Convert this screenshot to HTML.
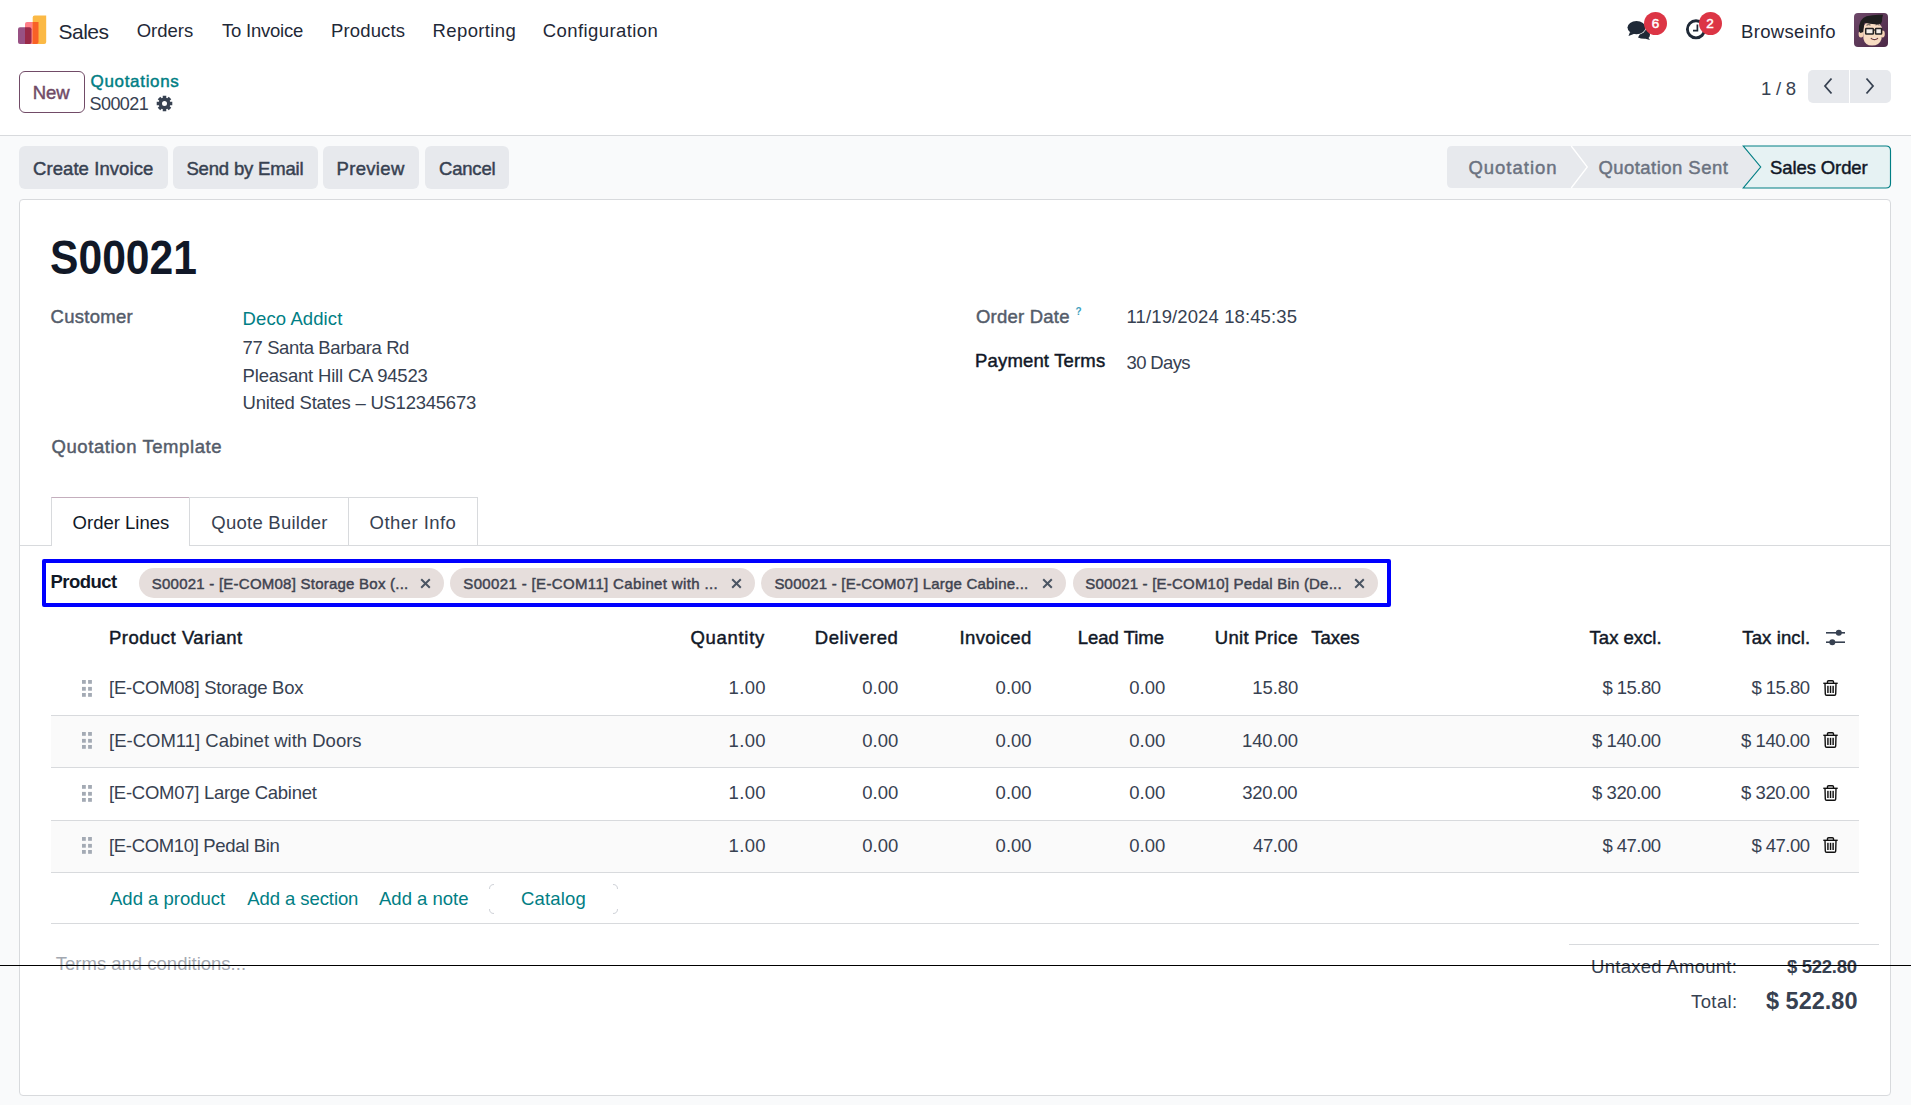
<!DOCTYPE html>
<html><head><meta charset="utf-8">
<style>
html,body{margin:0;padding:0;}
body{width:1911px;height:1105px;position:relative;overflow:hidden;background:#f9fafb;font-family:"Liberation Sans",sans-serif;color:#374151;}
.a{position:absolute;white-space:nowrap;line-height:1;}
.s{position:absolute;}
</style></head>
<body>
<!-- top white area -->
<div class="s" style="left:0;top:0;width:1911px;height:135px;background:#fff;border-bottom:1px solid #d8dadd;"></div>

<!-- logo -->
<svg class="s" style="left:17px;top:15px" width="30" height="30" viewBox="0 0 30 30">
  <path d="M1 14.2 Q1 12.2 3 12.2 H14.5 V29 H3 Q1 29 1 27 Z" fill="#985184"/>
  <path d="M8 9 Q8 7 10 7 H21.5 V27 Q21.5 29 19.5 29 H8 Z" fill="#ff7f89"/>
  <path d="M8 12.2 H12.5 Q14.5 12.2 14.5 14.2 V27 Q14.5 29 12.5 29 H8 Z" fill="#9a2a48"/>
  <path d="M15.7 2.6 Q15.7 0.6 17.7 0.6 H29.2 V27 Q29.2 29 27.2 29 H15.7 Z" fill="#fbb945"/>
  <path d="M15.7 7 H21.5 V27 Q21.5 29 19.5 29 H15.7 Z" fill="#f86126"/>
</svg>

<!-- chat icon -->
<svg class="s" style="left:1626px;top:19px" width="28" height="22" viewBox="0 0 28 22">
  <path d="M17 9.5 A8 6 0 0 1 24 15.5 Q24 17.5 22.5 19 L24 21 L19.5 19.8 Q15 20 12 18.5 Z" fill="#1f2937"/>
  <ellipse cx="10.5" cy="8.6" rx="9.8" ry="7.2" fill="#fff"/>
  <ellipse cx="10.5" cy="8.6" rx="9" ry="6.6" fill="#1f2937"/>
  <path d="M4 13 L2.5 17 L9 14.5 Z" fill="#1f2937"/>
</svg>
<div class="s" style="left:1644px;top:11.5px;width:23px;height:23px;border-radius:50%;background:#dc3545;"></div>
<svg class="s" style="left:1685px;top:18.3px" width="24" height="24" viewBox="0 0 24 24">
  <circle cx="11" cy="11.3" r="8.6" fill="none" stroke="#1f2937" stroke-width="2.9"/>
  <path d="M12.4 6.4 V12.6 H8" fill="none" stroke="#1f2937" stroke-width="1.7"/>
</svg>
<div class="s" style="left:1698.6px;top:11.5px;width:23px;height:23px;border-radius:50%;background:#dc3545;"></div>
<div class="a" style="left:1644px;top:16.5px;width:23px;text-align:center;font-size:13.5px;-webkit-text-stroke:0.5px #fff;color:#fff;">6</div>
<div class="a" style="left:1698.6px;top:16.5px;width:23px;text-align:center;font-size:13.5px;-webkit-text-stroke:0.5px #fff;color:#fff;">2</div>

<!-- avatar -->
<svg class="s" style="left:1854px;top:13px" width="34" height="34" viewBox="0 0 34 34">
  <defs><linearGradient id="ag" x1="0" y1="0" x2="1" y2="1"><stop offset="0" stop-color="#6d4869"/><stop offset="1" stop-color="#4b2846"/></linearGradient></defs>
  <rect width="34" height="34" rx="4" fill="url(#ag)"/>
  <ellipse cx="7" cy="21" rx="2.4" ry="3.6" fill="#f4d2b4"/>
  <ellipse cx="28.6" cy="21" rx="2.2" ry="3.4" fill="#f4d2b4"/>
  <path d="M9 16 Q9 9 18 9 Q28 9 28 17 L27.5 26 Q25.5 32.6 18 32.6 Q11 32.6 9.5 26 Z" fill="#f7dcc2"/>
  <path d="M5 18.5 Q3.8 6 12.5 3.2 Q20 1.2 29 1.8 L28.2 5 Q28.5 8.5 27 10.8 Q18 11.8 10.5 9.8 L9.2 19 L6.5 20 Z" fill="#1e1e1e"/>
  <path d="M12.5 12.2 Q14.5 11.2 16.5 12" stroke="#333" stroke-width="0.9" fill="none"/>
  <path d="M21.5 11.8 Q23.5 11.2 25.5 12" stroke="#333" stroke-width="0.9" fill="none"/>
  <rect x="11.7" y="15.6" width="7.6" height="5.4" rx="0.6" fill="#f4efe9" stroke="#222" stroke-width="1.5"/>
  <rect x="21.6" y="15.6" width="6" height="5.4" rx="0.6" fill="#f4efe9" stroke="#222" stroke-width="1.5"/>
  <path d="M19.3 17 H21.6" stroke="#222" stroke-width="1.2"/>
  <path d="M16.8 25.3 Q20.5 28 24 25.3" fill="#fff" stroke="#6b3a3a" stroke-width="1.1"/>
</svg>

<!-- control panel -->
<div class="s" style="left:19px;top:71px;width:64px;height:40px;border:1px solid #714b67;border-radius:6px;background:#fff;"></div>
<svg class="s" style="left:155.5px;top:95px" width="17" height="17" viewBox="0 0 17 17"><path fill="#374151" fill-rule="evenodd" d="M6.78 2.86 L6.70 0.71 L10.30 0.71 L10.22 2.86 L11.27 3.29 L12.74 1.72 L15.28 4.26 L13.71 5.73 L14.14 6.78 L16.29 6.70 L16.29 10.30 L14.14 10.22 L13.71 11.27 L15.28 12.74 L12.74 15.28 L11.27 13.71 L10.22 14.14 L10.30 16.29 L6.70 16.29 L6.78 14.14 L5.73 13.71 L4.26 15.28 L1.72 12.74 L3.29 11.27 L2.86 10.22 L0.71 10.30 L0.71 6.70 L2.86 6.78 L3.29 5.73 L1.72 4.26 L4.26 1.72 L5.73 3.29 Z M11.00 8.50 A2.5 2.5 0 1 0 6.00 8.50 A2.5 2.5 0 1 0 11.00 8.50 Z"/></svg>
<div class="s" style="left:1807.5px;top:70px;width:41.5px;height:33px;background:#e7e9ed;border-radius:5px 0 0 5px;"></div>
<div class="s" style="left:1850px;top:70px;width:41px;height:33px;background:#e7e9ed;border-radius:0 5px 5px 0;"></div>
<svg class="s" style="left:1818px;top:76px" width="20" height="20" viewBox="0 0 20 20"><path d="M13.5 2.5 L7 10 L13.5 17.5" fill="none" stroke="#374151" stroke-width="1.8"/></svg>
<svg class="s" style="left:1860px;top:76px" width="20" height="20" viewBox="0 0 20 20"><path d="M6.5 2.5 L13 10 L6.5 17.5" fill="none" stroke="#374151" stroke-width="1.8"/></svg>

<!-- action buttons -->
<div class="s" style="left:19px;top:146px;width:149px;height:42.6px;background:#e7e9ed;border-radius:6px;"></div>
<div class="s" style="left:173px;top:146px;width:145px;height:42.6px;background:#e7e9ed;border-radius:6px;"></div>
<div class="s" style="left:323px;top:146px;width:96px;height:42.6px;background:#e7e9ed;border-radius:6px;"></div>
<div class="s" style="left:425px;top:146px;width:84px;height:42.6px;background:#e7e9ed;border-radius:6px;"></div>

<!-- statusbar -->
<svg class="s" style="left:1446px;top:145px" width="446" height="44" viewBox="0 0 446 44">
  <path d="M6 1 H297.3 L314.7 22 L297.3 43 H6 Q1 43 1 38 V6 Q1 1 6 1 Z" fill="#e7e9ed"/>
  <path d="M125.2 1 L141.3 22 L125.2 43" fill="none" stroke="#fff" stroke-width="1.3"/>
  <path d="M297.3 1 H440 Q444.5 1 444.5 5.5 V38.5 Q444.5 43 440 43 H297.3 L314.7 22 Z" fill="#e6f2f3" stroke="#017e84" stroke-width="1.15"/>
</svg>

<!-- sheet -->
<div class="s" style="left:19px;top:199px;width:1870px;height:895px;background:#fff;border:1px solid #d8dadd;border-radius:4px;"></div>
<div class="s" style="left:1075.5px;top:306.5px;font:700 10px/1 'Liberation Sans';color:#3d9fbe;">?</div>

<!-- tabs -->
<div class="s" style="left:20px;top:545px;width:1870px;height:1px;background:#d8dadd;"></div>
<div class="s" style="left:51px;top:497px;width:137px;height:48px;border:1px solid #d8dadd;border-bottom:none;border-top-color:#c4aebd;background:#fff;"></div>
<div class="s" style="left:189px;top:497px;width:158px;height:48px;border:1px solid #d8dadd;border-bottom:none;"></div>
<div class="s" style="left:348px;top:497px;width:128px;height:48px;border:1px solid #d8dadd;border-bottom:none;"></div>

<!-- product filter -->
<div class="s" style="left:42px;top:559px;width:1341px;height:40px;border:4px solid #0000ff;border-radius:2px;"></div>
<div class="s" style="left:139px;top:568px;width:305px;height:30px;background:#e6dedc;border-radius:15px;"></div>
<svg class="s" style="left:419.5px;top:578.3px" width="11" height="11" viewBox="0 0 11 11"><path d="M1.2 1.2L9.8 9.8M9.8 1.2L1.2 9.8" stroke="#4b5563" stroke-width="2"/></svg>
<div class="s" style="left:450px;top:568px;width:305px;height:30px;background:#e6dedc;border-radius:15px;"></div>
<svg class="s" style="left:730.5px;top:578.3px" width="11" height="11" viewBox="0 0 11 11"><path d="M1.2 1.2L9.8 9.8M9.8 1.2L1.2 9.8" stroke="#4b5563" stroke-width="2"/></svg>
<div class="s" style="left:761px;top:568px;width:305px;height:30px;background:#e6dedc;border-radius:15px;"></div>
<svg class="s" style="left:1041.5px;top:578.3px" width="11" height="11" viewBox="0 0 11 11"><path d="M1.2 1.2L9.8 9.8M9.8 1.2L1.2 9.8" stroke="#4b5563" stroke-width="2"/></svg>
<div class="s" style="left:1073px;top:568px;width:305px;height:30px;background:#e6dedc;border-radius:15px;"></div>
<svg class="s" style="left:1353.5px;top:578.3px" width="11" height="11" viewBox="0 0 11 11"><path d="M1.2 1.2L9.8 9.8M9.8 1.2L1.2 9.8" stroke="#4b5563" stroke-width="2"/></svg>


<!-- table -->
<svg class="s" style="left:1826px;top:629px" width="19" height="17" viewBox="0 0 19 17"><g fill="#374151"><rect x="0" y="3" width="19" height="1.6"/><rect x="0" y="12.4" width="19" height="1.6"/><circle cx="12.8" cy="3.8" r="3"/><circle cx="6.3" cy="13.2" r="3"/></g></svg>
<div class="s" style="left:51px;top:663px;width:1808px;height:52px;border-bottom:1px solid #d8dadd;"></div>
<svg class="s" style="left:82px;top:679.8px" width="11" height="17" viewBox="0 0 11 17"><g fill="#a3aab4"><rect x="0" y="0" width="3.8" height="3.8"/><rect x="6.1" y="0" width="3.8" height="3.8"/><rect x="0" y="6.9" width="3.8" height="3.8"/><rect x="6.1" y="6.9" width="3.8" height="3.8"/><rect x="0" y="13" width="3.8" height="3.8"/><rect x="6.1" y="13" width="3.8" height="3.8"/></g></svg>
<svg class="s" style="left:1823px;top:679.6px" width="15" height="16" viewBox="0 0 15 16"><g fill="none" stroke="#111" stroke-width="1.4"><path d="M0.3 3.3H14.7"/><path d="M4.5 3.3V1.8Q4.5 0.7 5.6 0.7H9.4Q10.5 0.7 10.5 1.8V3.3"/><path d="M2 3.3L2.3 14Q2.3 15.3 3.6 15.3H11.4Q12.7 15.3 12.7 14L13 3.3"/></g><g fill="#111"><rect x="4.2" y="5.8" width="1.45" height="7.2"/><rect x="6.8" y="5.8" width="1.45" height="7.2"/><rect x="9.4" y="5.8" width="1.45" height="7.2"/></g></svg>
<div class="s" style="left:51px;top:716px;width:1808px;height:51px;background:#fafafa;border-bottom:1px solid #d8dadd;"></div>
<svg class="s" style="left:82px;top:732.1px" width="11" height="17" viewBox="0 0 11 17"><g fill="#a3aab4"><rect x="0" y="0" width="3.8" height="3.8"/><rect x="6.1" y="0" width="3.8" height="3.8"/><rect x="0" y="6.9" width="3.8" height="3.8"/><rect x="6.1" y="6.9" width="3.8" height="3.8"/><rect x="0" y="13" width="3.8" height="3.8"/><rect x="6.1" y="13" width="3.8" height="3.8"/></g></svg>
<svg class="s" style="left:1823px;top:732.0px" width="15" height="16" viewBox="0 0 15 16"><g fill="none" stroke="#111" stroke-width="1.4"><path d="M0.3 3.3H14.7"/><path d="M4.5 3.3V1.8Q4.5 0.7 5.6 0.7H9.4Q10.5 0.7 10.5 1.8V3.3"/><path d="M2 3.3L2.3 14Q2.3 15.3 3.6 15.3H11.4Q12.7 15.3 12.7 14L13 3.3"/></g><g fill="#111"><rect x="4.2" y="5.8" width="1.45" height="7.2"/><rect x="6.8" y="5.8" width="1.45" height="7.2"/><rect x="9.4" y="5.8" width="1.45" height="7.2"/></g></svg>
<div class="s" style="left:51px;top:768px;width:1808px;height:52px;border-bottom:1px solid #d8dadd;"></div>
<svg class="s" style="left:82px;top:784.6px" width="11" height="17" viewBox="0 0 11 17"><g fill="#a3aab4"><rect x="0" y="0" width="3.8" height="3.8"/><rect x="6.1" y="0" width="3.8" height="3.8"/><rect x="0" y="6.9" width="3.8" height="3.8"/><rect x="6.1" y="6.9" width="3.8" height="3.8"/><rect x="0" y="13" width="3.8" height="3.8"/><rect x="6.1" y="13" width="3.8" height="3.8"/></g></svg>
<svg class="s" style="left:1823px;top:784.5px" width="15" height="16" viewBox="0 0 15 16"><g fill="none" stroke="#111" stroke-width="1.4"><path d="M0.3 3.3H14.7"/><path d="M4.5 3.3V1.8Q4.5 0.7 5.6 0.7H9.4Q10.5 0.7 10.5 1.8V3.3"/><path d="M2 3.3L2.3 14Q2.3 15.3 3.6 15.3H11.4Q12.7 15.3 12.7 14L13 3.3"/></g><g fill="#111"><rect x="4.2" y="5.8" width="1.45" height="7.2"/><rect x="6.8" y="5.8" width="1.45" height="7.2"/><rect x="9.4" y="5.8" width="1.45" height="7.2"/></g></svg>
<div class="s" style="left:51px;top:821px;width:1808px;height:51px;background:#fafafa;border-bottom:1px solid #d8dadd;"></div>
<svg class="s" style="left:82px;top:837.0px" width="11" height="17" viewBox="0 0 11 17"><g fill="#a3aab4"><rect x="0" y="0" width="3.8" height="3.8"/><rect x="6.1" y="0" width="3.8" height="3.8"/><rect x="0" y="6.9" width="3.8" height="3.8"/><rect x="6.1" y="6.9" width="3.8" height="3.8"/><rect x="0" y="13" width="3.8" height="3.8"/><rect x="6.1" y="13" width="3.8" height="3.8"/></g></svg>
<svg class="s" style="left:1823px;top:837.0px" width="15" height="16" viewBox="0 0 15 16"><g fill="none" stroke="#111" stroke-width="1.4"><path d="M0.3 3.3H14.7"/><path d="M4.5 3.3V1.8Q4.5 0.7 5.6 0.7H9.4Q10.5 0.7 10.5 1.8V3.3"/><path d="M2 3.3L2.3 14Q2.3 15.3 3.6 15.3H11.4Q12.7 15.3 12.7 14L13 3.3"/></g><g fill="#111"><rect x="4.2" y="5.8" width="1.45" height="7.2"/><rect x="6.8" y="5.8" width="1.45" height="7.2"/><rect x="9.4" y="5.8" width="1.45" height="7.2"/></g></svg>

<svg class="s" style="left:488px;top:883px" width="131" height="32" viewBox="0 0 131 32"><g fill="none" stroke="#c8ccd2" stroke-width="0.9"><path d="M1.5 6 Q1.5 1.5 6 1.5"/><path d="M125 1.5 Q129.5 1.5 129.5 6"/><path d="M1.5 26 Q1.5 30.5 6 30.5"/><path d="M125 30.5 Q129.5 30.5 129.5 26"/></g></svg>
<div class="s" style="left:51px;top:923px;width:1808px;height:1px;background:#d8dadd;"></div>

<!-- totals -->
<div class="s" style="left:1569px;top:944px;width:310px;height:1px;background:#d8dadd;"></div>

<div id="sales" class="a" style="top:20.52px;font-size:21px;color:#1f2937;letter-spacing:-0.500px;left:58.50px;">Sales</div>
<div id="n1" class="a" style="top:21.94px;font-size:18.5px;color:#1f2937;left:136.70px;">Orders</div>
<div id="n2" class="a" style="top:21.94px;font-size:18.5px;color:#1f2937;letter-spacing:-0.222px;left:222.00px;">To Invoice</div>
<div id="n3" class="a" style="top:21.94px;font-size:18.5px;color:#1f2937;letter-spacing:0.143px;left:331.00px;">Products</div>
<div id="n4" class="a" style="top:21.94px;font-size:18.5px;color:#1f2937;letter-spacing:0.375px;left:432.60px;">Reporting</div>
<div id="n5" class="a" style="top:21.94px;font-size:18.5px;color:#1f2937;letter-spacing:0.417px;left:542.80px;">Configuration</div>
<div id="bi" class="a" style="top:22.74px;font-size:18.5px;color:#1f2937;letter-spacing:0.333px;left:1741.00px;">Browseinfo</div>
<div id="new" class="a" style="top:84.14px;font-size:18.5px;color:#714b67;-webkit-text-stroke:0.45px #714b67;letter-spacing:-0.000px;left:32.70px;">New</div>
<div id="bc1" class="a" style="top:73.21px;font-size:17px;color:#017e84;-webkit-text-stroke:0.45px #017e84;letter-spacing:0.667px;left:90.60px;">Quotations</div>
<div id="bc2" class="a" style="top:95.06px;font-size:18px;color:#374151;letter-spacing:-0.600px;left:89.60px;">S00021</div>
<div id="pg" class="a" style="top:79.74px;font-size:18.5px;color:#374151;letter-spacing:-0.250px;left:1761.00px;">1 / 8</div>
<div id="ci" class="a" style="top:159.64px;font-size:18.5px;color:#374151;-webkit-text-stroke:0.45px #374151;letter-spacing:0.077px;left:33.00px;">Create Invoice</div>
<div id="se" class="a" style="top:159.64px;font-size:18.5px;color:#374151;-webkit-text-stroke:0.45px #374151;letter-spacing:-0.167px;left:186.40px;">Send by Email</div>
<div id="pv" class="a" style="top:159.64px;font-size:18.5px;color:#374151;-webkit-text-stroke:0.45px #374151;letter-spacing:0.333px;left:336.50px;">Preview</div>
<div id="cn" class="a" style="top:159.64px;font-size:18.5px;color:#374151;-webkit-text-stroke:0.45px #374151;letter-spacing:-0.200px;left:439.00px;">Cancel</div>
<div id="st1" class="a" style="top:159.34px;font-size:18.5px;color:#6b7280;-webkit-text-stroke:0.45px #6b7280;letter-spacing:1.000px;left:1468.40px;">Quotation</div>
<div id="st2" class="a" style="top:159.34px;font-size:18.5px;color:#6b7280;-webkit-text-stroke:0.45px #6b7280;letter-spacing:0.462px;left:1598.40px;">Quotation Sent</div>
<div id="st3" class="a" style="top:159.34px;font-size:18.5px;color:#111827;-webkit-text-stroke:0.45px #111827;letter-spacing:-0.100px;left:1770.00px;">Sales Order</div>
<div id="title" class="a" style="top:233.12px;font-size:49px;color:#111827;font-weight:700;left:50.00px;transform:scaleX(0.8702);transform-origin:0 0;">S00021</div>
<div id="cu" class="a" style="top:308.44px;font-size:18.5px;color:#545c6a;-webkit-text-stroke:0.45px #545c6a;letter-spacing:0.286px;left:50.50px;">Customer</div>
<div id="da" class="a" style="top:310.04px;font-size:18.5px;color:#017e84;letter-spacing:0.100px;left:242.60px;">Deco Addict</div>
<div id="a1" class="a" style="top:339.14px;font-size:18.5px;color:#374151;letter-spacing:-0.389px;left:242.60px;">77 Santa Barbara Rd</div>
<div id="a2" class="a" style="top:367.04px;font-size:18.5px;color:#374151;letter-spacing:-0.190px;left:242.60px;">Pleasant Hill CA 94523</div>
<div id="a3" class="a" style="top:393.94px;font-size:18.5px;color:#374151;letter-spacing:-0.240px;left:242.60px;">United States – US12345673</div>
<div id="qt" class="a" style="top:437.84px;font-size:18.5px;color:#545c6a;-webkit-text-stroke:0.45px #545c6a;letter-spacing:0.588px;left:51.50px;">Quotation Template</div>
<div id="od" class="a" style="top:308.44px;font-size:18.5px;color:#545c6a;-webkit-text-stroke:0.45px #545c6a;letter-spacing:0.222px;left:976.00px;">Order Date</div>
<div id="odv" class="a" style="top:308.14px;font-size:18.5px;color:#374151;letter-spacing:0.111px;left:1126.60px;">11/19/2024 18:45:35</div>
<div id="pt" class="a" style="top:352.44px;font-size:18.5px;color:#111827;-webkit-text-stroke:0.45px #111827;letter-spacing:0.167px;left:975.00px;">Payment Terms</div>
<div id="ptv" class="a" style="top:353.94px;font-size:18.5px;color:#374151;letter-spacing:-0.667px;left:1126.60px;">30 Days</div>
<div id="tb1" class="a" style="top:514.04px;font-size:18.5px;color:#111827;letter-spacing:0.000px;left:72.60px;">Order Lines</div>
<div id="tb2" class="a" style="top:514.04px;font-size:18.5px;color:#374151;letter-spacing:0.250px;left:211.30px;">Quote Builder</div>
<div id="tb3" class="a" style="top:514.04px;font-size:18.5px;color:#374151;letter-spacing:0.444px;left:369.60px;">Other Info</div>
<div id="pr" class="a" style="top:572.94px;font-size:18.5px;color:#111827;font-weight:700;letter-spacing:-0.500px;left:50.40px;">Product</div>
<div id="h1" class="a" style="top:629.04px;font-size:18.5px;color:#111827;-webkit-text-stroke:0.45px #111827;letter-spacing:0.500px;left:109.00px;">Product Variant</div>
<div id="h2" class="a" style="top:629.04px;font-size:18.5px;color:#111827;-webkit-text-stroke:0.45px #111827;letter-spacing:0.714px;left:690.40px;">Quantity</div>
<div id="h3" class="a" style="top:629.04px;font-size:18.5px;color:#111827;-webkit-text-stroke:0.45px #111827;letter-spacing:0.625px;left:814.70px;">Delivered</div>
<div id="h4" class="a" style="top:629.04px;font-size:18.5px;color:#111827;-webkit-text-stroke:0.45px #111827;letter-spacing:0.429px;left:959.40px;">Invoiced</div>
<div id="h5" class="a" style="top:629.04px;font-size:18.5px;color:#111827;-webkit-text-stroke:0.45px #111827;letter-spacing:0.000px;left:1077.70px;">Lead Time</div>
<div id="h6" class="a" style="top:629.04px;font-size:18.5px;color:#111827;-webkit-text-stroke:0.45px #111827;letter-spacing:0.333px;left:1214.70px;">Unit Price</div>
<div id="h7" class="a" style="top:629.04px;font-size:18.5px;color:#111827;-webkit-text-stroke:0.45px #111827;left:1311.30px;">Taxes</div>
<div id="h8" class="a" style="top:629.04px;font-size:18.5px;color:#111827;-webkit-text-stroke:0.45px #111827;letter-spacing:0.000px;left:1589.60px;">Tax excl.</div>
<div id="h9" class="a" style="top:629.04px;font-size:18.5px;color:#111827;-webkit-text-stroke:0.45px #111827;letter-spacing:0.125px;left:1742.30px;">Tax incl.</div>
<div id="l1" class="a" style="top:890.34px;font-size:18.5px;color:#017e84;letter-spacing:0.000px;left:110.00px;">Add a product</div>
<div id="l2" class="a" style="top:890.34px;font-size:18.5px;color:#017e84;letter-spacing:-0.083px;left:247.30px;">Add a section</div>
<div id="l3" class="a" style="top:890.34px;font-size:18.5px;color:#017e84;letter-spacing:0.000px;left:379.00px;">Add a note</div>
<div id="l4" class="a" style="top:890.34px;font-size:18.5px;color:#017e84;letter-spacing:0.167px;left:521.00px;">Catalog</div>
<div id="tc" class="a" style="top:955.14px;font-size:18.5px;color:#a3a8b1;letter-spacing:0.000px;left:55.80px;">Terms and conditions...</div>
<div id="ua" class="a" style="top:958.24px;font-size:18.5px;color:#374151;letter-spacing:0.286px;left:1591.00px;">Untaxed Amount:</div>
<div id="uav" class="a" style="top:958.14px;font-size:18.5px;color:#374151;font-weight:700;letter-spacing:-0.286px;left:1787.00px;">$ 522.80</div>
<div id="tt" class="a" style="top:992.64px;font-size:18.5px;color:#374151;letter-spacing:0.400px;left:1691.00px;">Total:</div>
<div id="ttv" class="a" style="top:989.71px;font-size:23.5px;color:#374151;font-weight:700;letter-spacing:-0.000px;left:1766.00px;">$ 522.80</div>
<div id="r0n" class="a" style="top:679.34px;font-size:18.5px;color:#374151;letter-spacing:-0.250px;left:109.00px;">[E-COM08] Storage Box</div>
<div id="r0c0" class="a" style="top:679.34px;font-size:18.5px;color:#374151;letter-spacing:0.333px;left:728.60px;">1.00</div>
<div id="r0c1" class="a" style="top:679.34px;font-size:18.5px;color:#374151;letter-spacing:0.000px;left:862.30px;">0.00</div>
<div id="r0c2" class="a" style="top:679.34px;font-size:18.5px;color:#374151;letter-spacing:0.000px;left:995.60px;">0.00</div>
<div id="r0c3" class="a" style="top:679.34px;font-size:18.5px;color:#374151;letter-spacing:0.000px;left:1129.30px;">0.00</div>
<div id="r0c4" class="a" style="top:679.34px;font-size:18.5px;color:#374151;letter-spacing:-0.050px;left:1252.20px;">15.80</div>
<div id="r0c5" class="a" style="top:679.34px;font-size:18.5px;color:#374151;letter-spacing:-0.533px;left:1602.50px;">$ 15.80</div>
<div id="r0c6" class="a" style="top:679.34px;font-size:18.5px;color:#374151;letter-spacing:-0.533px;left:1751.50px;">$ 15.80</div>
<div id="r1n" class="a" style="top:732.04px;font-size:18.5px;color:#374151;left:109.00px;">[E-COM11] Cabinet with Doors</div>
<div id="r1c0" class="a" style="top:732.04px;font-size:18.5px;color:#374151;letter-spacing:0.333px;left:728.60px;">1.00</div>
<div id="r1c1" class="a" style="top:732.04px;font-size:18.5px;color:#374151;letter-spacing:0.000px;left:862.30px;">0.00</div>
<div id="r1c2" class="a" style="top:732.04px;font-size:18.5px;color:#374151;letter-spacing:0.000px;left:995.60px;">0.00</div>
<div id="r1c3" class="a" style="top:732.04px;font-size:18.5px;color:#374151;letter-spacing:0.000px;left:1129.30px;">0.00</div>
<div id="r1c4" class="a" style="top:732.04px;font-size:18.5px;color:#374151;letter-spacing:-0.120px;left:1242.00px;">140.00</div>
<div id="r1c5" class="a" style="top:732.04px;font-size:18.5px;color:#374151;letter-spacing:-0.429px;left:1592.00px;">$ 140.00</div>
<div id="r1c6" class="a" style="top:732.04px;font-size:18.5px;color:#374151;letter-spacing:-0.429px;left:1741.00px;">$ 140.00</div>
<div id="r2n" class="a" style="top:784.34px;font-size:18.5px;color:#374151;letter-spacing:-0.273px;left:109.00px;">[E-COM07] Large Cabinet</div>
<div id="r2c0" class="a" style="top:784.34px;font-size:18.5px;color:#374151;letter-spacing:0.333px;left:728.60px;">1.00</div>
<div id="r2c1" class="a" style="top:784.34px;font-size:18.5px;color:#374151;letter-spacing:0.000px;left:862.30px;">0.00</div>
<div id="r2c2" class="a" style="top:784.34px;font-size:18.5px;color:#374151;letter-spacing:0.000px;left:995.60px;">0.00</div>
<div id="r2c3" class="a" style="top:784.34px;font-size:18.5px;color:#374151;letter-spacing:0.000px;left:1129.30px;">0.00</div>
<div id="r2c4" class="a" style="top:784.34px;font-size:18.5px;color:#374151;letter-spacing:-0.240px;left:1242.20px;">320.00</div>
<div id="r2c5" class="a" style="top:784.34px;font-size:18.5px;color:#374151;letter-spacing:-0.429px;left:1592.00px;">$ 320.00</div>
<div id="r2c6" class="a" style="top:784.34px;font-size:18.5px;color:#374151;letter-spacing:-0.429px;left:1741.00px;">$ 320.00</div>
<div id="r3n" class="a" style="top:836.94px;font-size:18.5px;color:#374151;letter-spacing:-0.333px;left:109.00px;">[E-COM10] Pedal Bin</div>
<div id="r3c0" class="a" style="top:836.94px;font-size:18.5px;color:#374151;letter-spacing:0.333px;left:728.60px;">1.00</div>
<div id="r3c1" class="a" style="top:836.94px;font-size:18.5px;color:#374151;letter-spacing:0.000px;left:862.30px;">0.00</div>
<div id="r3c2" class="a" style="top:836.94px;font-size:18.5px;color:#374151;letter-spacing:0.000px;left:995.60px;">0.00</div>
<div id="r3c3" class="a" style="top:836.94px;font-size:18.5px;color:#374151;letter-spacing:0.000px;left:1129.30px;">0.00</div>
<div id="r3c4" class="a" style="top:836.94px;font-size:18.5px;color:#374151;letter-spacing:-0.400px;left:1253.00px;">47.00</div>
<div id="r3c5" class="a" style="top:836.94px;font-size:18.5px;color:#374151;letter-spacing:-0.533px;left:1602.50px;">$ 47.00</div>
<div id="r3c6" class="a" style="top:836.94px;font-size:18.5px;color:#374151;letter-spacing:-0.533px;left:1751.50px;">$ 47.00</div>
<div id="ch0" class="a" style="top:576.30px;font-size:15px;color:#3f4350;-webkit-text-stroke:0.45px #3f4350;letter-spacing:0.235px;left:151.80px;">S00021 - [E-COM08] Storage Box (...</div>
<div id="ch1" class="a" style="top:576.30px;font-size:15px;color:#3f4350;-webkit-text-stroke:0.45px #3f4350;letter-spacing:0.353px;left:463.30px;">S00021 - [E-COM11] Cabinet with ...</div>
<div id="ch2" class="a" style="top:576.30px;font-size:15px;color:#3f4350;-webkit-text-stroke:0.45px #3f4350;letter-spacing:0.212px;left:774.40px;">S00021 - [E-COM07] Large Cabine...</div>
<div id="ch3" class="a" style="top:576.30px;font-size:15px;color:#3f4350;-webkit-text-stroke:0.45px #3f4350;letter-spacing:0.206px;left:1085.30px;">S00021 - [E-COM10] Pedal Bin (De...</div>

<div class="s" style="left:0;top:965px;width:1911px;height:1px;background:#000;"></div>
</body></html>
